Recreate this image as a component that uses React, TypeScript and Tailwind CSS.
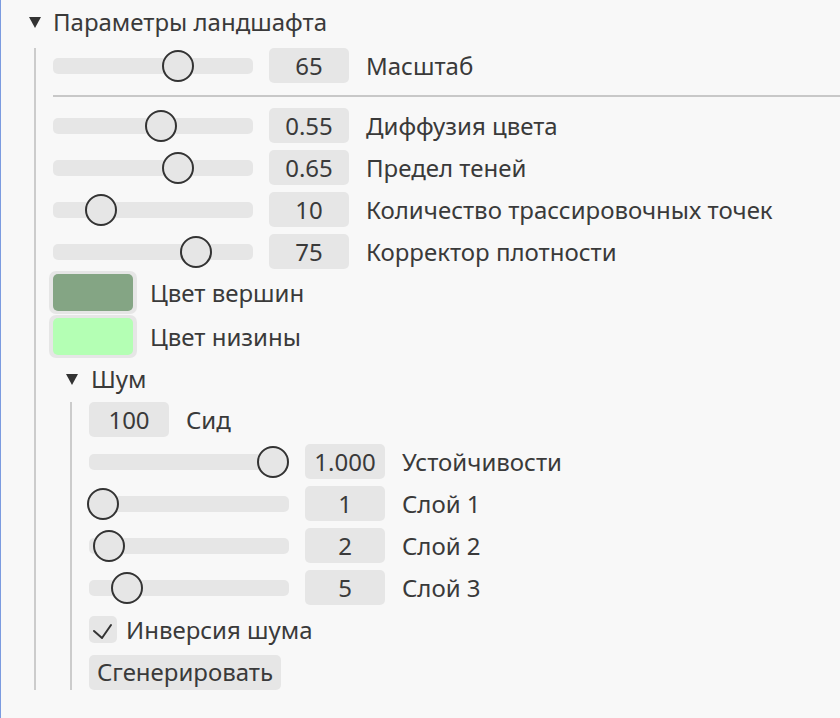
import React from "react";

const FONT = { fontFamily: '"Noto Sans", "Open Sans", sans-serif' };

function Triangle() {
  return (
    <svg width="12" height="11" viewBox="0 0 12 11" className="shrink-0">
      <polygon points="0,0 12,0 6,11" fill="#333333" />
    </svg>
  );
}

function Slider({ frac }: { frac: number }) {
  return (
    <div className="relative w-[200px] h-[35px] flex items-center shrink-0">
      <div className="w-full h-4 rounded-[5px] bg-[#e6e6e6]" />
      <div
        className="absolute top-[2px] w-[32px] h-[32px] rounded-full border-2 border-[#333333] bg-[#e6e6e6]"
        style={{ left: `${frac * 168}px` }}
      />
    </div>
  );
}

function NumBox({ v }: { v: string }) {
  return (
    <div className="w-[80px] h-[35px] shrink-0 rounded-[5px] bg-[#e6e6e6] flex items-center justify-center leading-none">
      {v}
    </div>
  );
}

function SliderRow({ frac, v, label }: { frac: number; v: string; label: string }) {
  return (
    <div className="flex items-center h-[35px]">
      <Slider frac={frac} />
      <div className="ml-4">
        <NumBox v={v} />
      </div>
      <div className="ml-[17px] whitespace-nowrap leading-none">{label}</div>
    </div>
  );
}

function Swatch({ color, label }: { color: string; label: string }) {
  return (
    <div className="flex items-center">
      <div className="-ml-1 p-1 py-[3px] rounded-[7px] bg-[#e6e6e6]">
        <div className="w-[80px] h-[37px] rounded-[5px]" style={{ backgroundColor: color }} />
      </div>
      <div className="ml-[13px] whitespace-nowrap leading-none">{label}</div>
    </div>
  );
}

export default function App() {
  return (
    <div
      className="w-[840px] h-[718px] bg-[#f8f8f8] border-l border-[#7b9be0] text-[24px] text-[#3a3a3a] overflow-hidden"
      style={FONT}
    >
      <div className="pt-[8px]">
        <div className="flex items-center h-[28px] pl-[28px]">
          <Triangle />
          <span className="ml-[12px] leading-[28px]">Параметры ландшафта</span>
        </div>
        <div className="mt-[12px] ml-[33px] pl-[17px] border-l-2 border-[#cccccc] pb-[0px]">
          <SliderRow frac={0.65} v="65" label="Масштаб" />
          <div className="mt-[12px] mb-[11px] h-[2px] bg-[#c8c8c8]" />
          <div className="flex flex-col gap-[7px]">
            <SliderRow frac={0.55} v="0.55" label="Диффузия цвета" />
            <SliderRow frac={0.65} v="0.65" label="Предел теней" />
            <SliderRow frac={0.19} v="10" label="Количество трассировочных точек" />
            <SliderRow frac={0.754} v="75" label="Корректор плотности" />
          </div>
          <div className="mt-[2px] flex flex-col gap-[1px]">
            <Swatch color="#84a584" label="Цвет вершин" />
            <Swatch color="#b4ffb4" label="Цвет низины" />
          </div>
          <div className="mt-[7px] flex items-center h-[28px] pl-[13px]">
            <Triangle />
            <span className="ml-[13px] leading-[28px]">Шум</span>
          </div>
          <div className="mt-[9px] ml-[17px] pl-[17px] border-l-2 border-[#cccccc] pb-0">
            <div className="flex items-center h-[35px]">
              <NumBox v="100" />
              <div className="ml-[17px] leading-none">Сид</div>
            </div>
            <div className="mt-[7px] flex flex-col gap-[7px]">
              <SliderRow frac={1} v="1.000" label="Устойчивости" />
              <SliderRow frac={-0.012} v="1" label="Слой 1" />
              <SliderRow frac={0.024} v="2" label="Слой 2" />
              <SliderRow frac={0.129} v="5" label="Слой 3" />
            </div>
            <div className="mt-[11px] flex items-center h-[27px]">
              <div className="w-[28px] h-[27px] rounded-[5px] bg-[#e6e6e6] flex items-center justify-center">
                <svg width="28" height="27" viewBox="0 0 28 27">
                  <polyline points="5,15 13,22 22,9" fill="none" stroke="#333333" strokeWidth="2" strokeLinecap="round" strokeLinejoin="round" />
                </svg>
              </div>
              <div className="ml-[9px] whitespace-nowrap leading-none">Инверсия шума</div>
            </div>
            <div className="mt-[11px] pb-0">
              <div className="inline-flex items-center h-[35px] px-[8px] rounded-[5px] bg-[#e6e6e6] -mb-[2px] leading-none">
                Сгенерировать
              </div>
            </div>
          </div>
        </div>
      </div>
    </div>
  );
}
